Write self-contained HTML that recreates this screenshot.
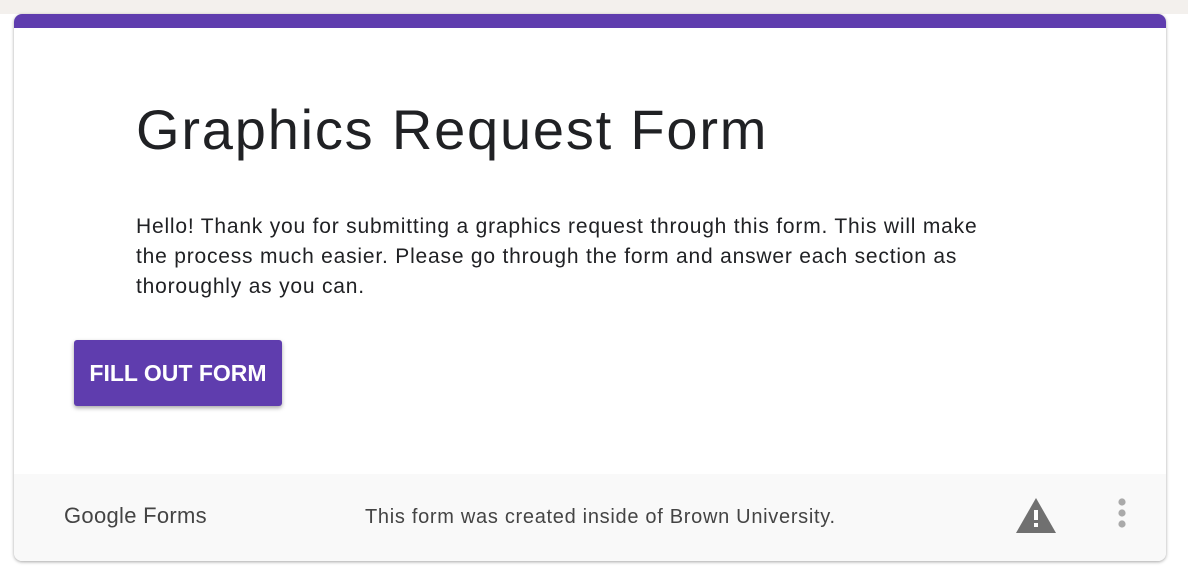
<!DOCTYPE html>
<html><head><style>
body{margin:0;width:1188px;height:586px;background:#fff;position:relative;overflow:hidden;font-family:"Liberation Sans",sans-serif;}
.top{position:absolute;left:0;top:0;width:1188px;height:14px;background:#f3f0ed}
.card{position:absolute;left:14px;top:14px;width:1152px;height:547px;background:#fff;border-radius:8px;box-shadow:0 1px 3px rgba(0,0,0,.35);overflow:hidden}
.bar{height:14px;background:#5f3dae}
h1{position:absolute;left:122px;top:83px;margin:0;font-weight:400;font-size:56px;color:#202124;letter-spacing:1.8px}
p{position:absolute;left:122px;top:198px;margin:0;width:875px;font-size:21px;line-height:30px;color:#202124;letter-spacing:0.8px}
.btn{position:absolute;left:60px;top:326px;width:208px;height:66px;background:#5f3dae;border-radius:3px;box-shadow:0 2px 4px rgba(0,0,0,.35);color:#fff;font-weight:bold;font-size:23px;line-height:66px;text-align:center}
.foot{position:absolute;left:0;top:460px;width:1152px;height:87px;background:#f9f9f9}
.gf{position:absolute;left:50px;top:29px;font-size:22px;color:#444;letter-spacing:.3px}
.msg{position:absolute;left:351px;top:32px;font-size:20px;color:#444;letter-spacing:.7px}
</style></head><body>
<div class="top"></div>
<div class="card"><div class="bar"></div>
<h1>Graphics Request Form</h1>
<p>Hello! Thank you for submitting a graphics request through this form. This will make the process much easier. Please go through the form and answer each section as thoroughly as you can.</p>
<div class="btn">FILL OUT FORM</div>
<div class="foot">
<div class="gf">Google Forms</div>
<div class="msg">This form was created inside of Brown University.</div>
<svg style="position:absolute;left:1001px;top:24px" width="42" height="36" viewBox="0 0 42 36"><path d="M21 0L41 35H1Z" fill="#707070"/><rect x="19" y="12" width="4" height="10" fill="#fff"/><rect x="19" y="25" width="4" height="4" fill="#fff"/></svg>
<svg style="position:absolute;left:1103px;top:23px" width="10" height="34"><circle cx="5" cy="5" r="3.6" fill="#aaa"/><circle cx="5" cy="16" r="3.6" fill="#aaa"/><circle cx="5" cy="27" r="3.6" fill="#aaa"/></svg>
</div></div>
</body></html>
